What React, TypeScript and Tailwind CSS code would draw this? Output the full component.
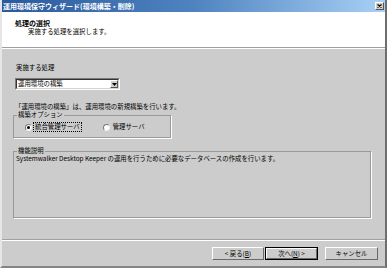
import React from 'react';

const jp = { fontFamily: '"Noto Sans CJK JP", "Noto Sans", sans-serif' };

// classic 3d button
const Btn: React.FC<{ children: React.ReactNode; def?: boolean; w: string }> = ({ children, def, w }) => {
  return (
    <div className={`${w} h-[13px] ${def ? 'border border-black' : ''} flex`}>
      <div className="flex-1 flex items-center justify-center bg-[#cccccc] border border-t-white border-l-white border-b-[#6a6a6a] border-r-[#6a6a6a] text-[6.4px] leading-[8px] text-black">
        {children}
      </div>
    </div>
  );
};

const Radio: React.FC<{ checked?: boolean }> = ({ checked }) => (
  <div className="w-[7px] h-[7px] rounded-full bg-white border border-t-[#7a7a7a] border-l-[#7a7a7a] border-b-[#eeeeee] border-r-[#eeeeee] flex items-center justify-center">
    {checked && <div className="w-[3px] h-[3px] rounded-full bg-black" />}
  </div>
);

export default function App() {
  return (
    <div
      style={jp}
      className="w-[387px] h-[268px] flex flex-col bg-[#cccccc] border-l-2 border-l-[#e6e6e6] border-r-2 border-r-[#6e6e6e] border-b-2 border-b-[#858585] text-black"
    >
      {/* title bar */}
      <div className="h-[12px] flex items-center justify-between pl-[1px] pr-[1px] bg-gradient-to-r from-[#2b5a9c] via-[#4f83c0] to-[#a9d1f5]">
        <span className="text-[7px] leading-[8px] font-bold text-white">運用環境保守ウィザード(環境構築・削除)</span>
        <div className="w-[9px] h-[8px] bg-[#d4d0c8] border border-t-white border-l-white border-b-[#555555] border-r-[#555555] flex items-center justify-center">
          <svg width="5" height="4" viewBox="0 0 5 4">
            <path d="M0.5 0.5 L4.5 3.5 M4.5 0.5 L0.5 3.5" stroke="#000" strokeWidth="1.2" />
          </svg>
        </div>
      </div>

      {/* header */}
      <div className="h-[35px] bg-white pl-[13px] pt-[7px]">
        <div className="text-[7px] leading-[8px] font-bold">処理の選択</div>
        <div className="text-[6.4px] leading-[8px] mt-[1px] ml-[13px]">実施する処理を選択します。</div>
      </div>
      <div className="h-px bg-[#a0a0a0]" />
      <div className="h-px bg-white" />

      {/* body */}
      <div className="flex-1 pl-[11px] pt-[15px] flex flex-col items-start">
        <div className="ml-[3px] text-[6.4px] leading-[8px]">実施する処理</div>
        <div className="ml-[2px] mt-[6px] w-[105px] h-[12px] border border-t-[#7a7a7a] border-l-[#7a7a7a] border-b-white border-r-white">
          <div className="h-full bg-white border border-t-[#333333] border-l-[#333333] border-b-[#d4d4d4] border-r-[#d4d4d4] flex items-center justify-between">
            <span className="ml-[1px] text-[6.4px] leading-[8px]">運用環境の構築</span>
            <div className="w-[8px] h-full bg-[#d4d0c8] border border-t-white border-l-white border-b-[#555555] border-r-[#555555] flex items-center justify-center">
              <svg width="5" height="3" viewBox="0 0 5 3">
                <path d="M0 0 H5 L2.5 3 Z" fill="#000" />
              </svg>
            </div>
          </div>
        </div>
        <div className="ml-[2px] mt-[13px] text-[6.4px] leading-[8px]">「運用環境の構築」は、運用環境の新規構築を行います。</div>

        <fieldset className="w-[158px] border border-[#999999] shadow-[1px_1px_0_#ffffff] px-[11px] pb-[5px]">
          <legend className="ml-[-8px] px-[1px] text-[6.4px] leading-[8px]">構築オプション</legend>
          <div className="mt-[3px] h-[10px] flex items-center">
            <Radio checked />
            <span className="ml-[1px] h-[10px] px-[1px] flex items-center border border-dotted border-black text-[6.4px] leading-[8px]">統合管理サーバ</span>
            <div className="ml-[21px]">
              <Radio />
            </div>
            <span className="ml-[3px] text-[6.4px] leading-[8px]">管理サーバ</span>
          </div>
        </fieldset>

        <fieldset className="mt-[9px] w-[358px] h-[71px] border border-[#999999] shadow-[1px_1px_0_#ffffff] px-[2px]">
          <legend className="ml-[1px] px-[1px] text-[6.4px] leading-[8px]">機能説明</legend>
          <div className="text-[6.4px] leading-[8px]">
            Systemwalker Desktop Keeper の運用を行うために必要なデータベースの作成を行います。
          </div>
        </fieldset>
      </div>

      {/* footer */}
      <div className="h-px bg-[#a0a0a0]" />
      <div className="h-px bg-white" />
      <div className="h-[25px] pt-[6px] pr-[7px] flex justify-end items-start">
        <Btn w="w-[52px]">
          &lt; 戻る(<span className="underline">B</span>)
        </Btn>
        <div className="w-px" />
        <Btn w="w-[53px]" def>
          次へ(<span className="underline">N</span>) &gt;
        </Btn>
        <div className="w-[7px]" />
        <Btn w="w-[53px]">キャンセル</Btn>
      </div>
    </div>
  );
}
